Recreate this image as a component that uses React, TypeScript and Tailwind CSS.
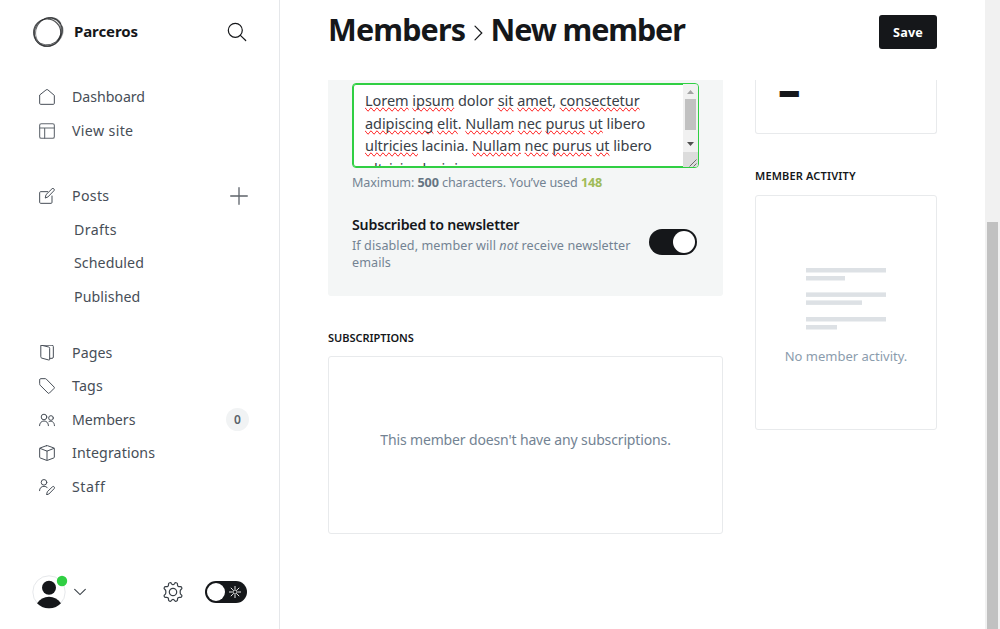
import type { ReactNode } from "react";

function Icon({ children, className = "h-4 w-4" }: { children: ReactNode; className?: string }) {
  return (
    <svg viewBox="0 0 24 24" fill="none" stroke="currentColor" strokeWidth="1.5" strokeLinecap="round" strokeLinejoin="round" className={className}>
      {children}
    </svg>
  );
}

const homeIcon = <path d="M1 9.6V21.5A1.5 1.5 0 0 0 2.5 23h19a1.5 1.5 0 0 0 1.500-1.500V9.600L13.200 1.200a1.800 1.800 0 0 0-2.400 0Z" />;
const layoutIcon = (
  <g strokeWidth="1.6" opacity="0.85">
    <rect x="1" y="1" width="22" height="22" rx="2.500" />
    <path d="M1 7.500h22M8.500 7.500V23" />
  </g>
);
const editIcon = (
  <g>
    <path d="M13 5.500H2.500A1.500 1.500 0 0 0 1 7v14.500A1.500 1.500 0 0 0 2.500 23H18a1.500 1.500 0 0 0 1.500-1.500V12" />
    <path d="M9.500 14.500l1-4.500L19.400 1.300a1.900 1.900 0 0 1 2.900 0 1.900 1.900 0 0 1 .1 2.800L13.800 13Z" />
  </g>
);
const pagesIcon = (
  <g>
    <path d="M3.500.300h16a2 2 0 0 1 2 2V18a2 2 0 0 1-2 2h-3" />
    <path d="M3.500.300 14.500 3a2 2 0 0 1 1.500 2v16.500a1 1 0 0 1-1.300 1L4.200 19.700a2 2 0 0 1-1.500-2V1Z" />
  </g>
);
const tagIcon = <path d="M1 2.500A1.500 1.500 0 0 1 2.500 1h6.800a2.500 2.500 0 0 1 1.700.700L22.600 13.500a1.500 1.500 0 0 1 0 2.100l-7 7a1.500 1.500 0 0 1-2.100 0L1.700 10.800A2.500 2.500 0 0 1 1 9.100Z" />;
const membersIcon = (
  <g>
    <circle cx="7.500" cy="7.500" r="4.200" />
    <circle cx="18" cy="9" r="3.500" />
    <path d="M.800 20.500c0-4 2.800-7 6.700-7s6.700 3 6.700 7M15 14.400c4-2 8.200.600 8.200 6.100" />
  </g>
);
const boxIcon = (
  <g>
    <path d="M11.300 1 1.800 4.400A1.300 1.300 0 0 0 1 5.600v12.600a1.300 1.300 0 0 0 .8 1.200L11.300 23a2 2 0 0 0 1.400 0l9.500-3.600a1.300 1.300 0 0 0 .8-1.200V5.600a1.300 1.300 0 0 0-.8-1.200L12.700 1a2 2 0 0 0-1.400 0Z" />
    <path d="M1.400 5 12 9.200 22.600 5M12 9.200V23" />
  </g>
);
const staffIcon = (
  <g>
    <circle cx="7.500" cy="5" r="4.200" />
    <path d="M.800 17.500c0-4 2.800-6.500 6.700-6.500 2.300 0 4 .900 5.200 2.300" />
    <path d="M11.500 23.200l.900-4L20 11.800a1.900 1.900 0 0 1 2.700 2.700l-7.500 7.600Z" />
  </g>
);

function NavRow({ icon, label, spacing, children }: { icon: ReactNode; label: string; spacing: string; children?: ReactNode }) {
  return (
    <li className="flex h-[33.5px] items-center pl-[39px] pr-[30px]">
      <Icon>{icon}</Icon>
      <span className={`ml-[17px] flex-1 whitespace-nowrap ${spacing}`}>{label}</span>
      {children}
    </li>
  );
}

function SubRow({ label, spacing }: { label: string; spacing: string }) {
  return (
    <li className="flex h-[33.5px] items-center pl-[74px]">
      <span className={`whitespace-nowrap ${spacing}`}>{label}</span>
    </li>
  );
}

function Logo() {
  return (
    <svg viewBox="0 0 32 32" className="h-8 w-8" fill="none" stroke="#26282b">
      <circle cx="15.200" cy="16.600" r="13.600" strokeWidth="1.200" opacity="0.800" />
      <ellipse cx="16.600" cy="15.600" rx="14.600" ry="13" strokeWidth="0.900" opacity="0.700" transform="rotate(-35 16 16)" />
      <ellipse cx="16.800" cy="15.400" rx="13" ry="14.700" strokeWidth="0.900" opacity="0.600" transform="rotate(25 16 16)" />
      <ellipse cx="15.800" cy="16" rx="15" ry="12.600" strokeWidth="0.900" opacity="0.550" transform="rotate(-55 16 16)" />
      <path d="M16 2.400c5-.800 10 1 12.500 5.500M29.500 10c2 5 .500 11-4 15" strokeWidth="2.400" opacity="0.400" />
    </svg>
  );
}

function Gear() {
  return (
    <svg viewBox="0 0 20 20" className="h-5 w-5" fill="none" stroke="#394047" strokeWidth="1.200" strokeLinejoin="round">
      <circle cx="10" cy="10" r="3.700" />
      <path d="M10 2.700c.900 0 1.200-.500 1.600-1.300.400-.900 1-.900 1.700-.600.900.300 1.300.700 1.200 1.500-.100.900 0 1.500.600 2s1.200.500 2.100.300c.800-.200 1.200.200 1.500.900.400.800.300 1.300-.400 1.800-.800.600-1.100 1.100-1.100 1.800v1.800c0 .700.300 1.200 1.100 1.800.700.500.800 1 .400 1.800-.300.700-.700 1.100-1.500.900-.900-.200-1.500-.200-2.100.300s-.700 1.100-.600 2c.100.800-.300 1.200-1.200 1.500-.700.300-1.300.300-1.700-.600-.400-.800-.700-1.300-1.600-1.300s-1.200.500-1.600 1.300c-.400.900-1 .900-1.700.600-.900-.300-1.300-.700-1.200-1.500.100-.900 0-1.500-.600-2s-1.200-.500-2.100-.300c-.800.200-1.200-.200-1.500-.900-.400-.800-.300-1.300.400-1.800.800-.600 1.100-1.100 1.100-1.800V9.100c0-.700-.300-1.200-1.100-1.800-.700-.500-.800-1-.400-1.800.300-.700.700-1.100 1.500-.900.900.200 1.500.200 2.100-.300s.700-1.100.600-2c-.100-.800.300-1.200 1.200-1.500.700-.300 1.300-.300 1.700.600.400.800.700 1.300 1.600 1.300Z" />
    </svg>
  );
}

function Misspelt({ children }: { children: string }) {
  return <span className="[text-decoration-line:spelling-error]">{children}</span>;
}

function NotesField() {
  return (
    <div className="flex h-[85px] w-[347px] overflow-hidden rounded-[4px] border border-[#30cf43] bg-white shadow-[inset_0_0_0_1px_#30cf43]">
      <div className="my-px h-[81px] flex-1 overflow-hidden whitespace-nowrap pl-3 pt-1 text-[14.5px] leading-[22.5px] text-[#394047]">
        <p className="tracking-[-0.045px]">
          <Misspelt>Lorem</Misspelt> <Misspelt>ipsum</Misspelt> dolor <Misspelt>sit</Misspelt> <Misspelt>amet</Misspelt>, <Misspelt>consectetur</Misspelt>
        </p>
        <p className="tracking-[-0.06px]">
          <Misspelt>adipiscing</Misspelt> <Misspelt>elit</Misspelt>. <Misspelt>Nullam</Misspelt> <Misspelt>nec</Misspelt> <Misspelt>purus</Misspelt> <Misspelt>ut</Misspelt> libero
        </p>
        <p className="tracking-[-0.065px]">
          <Misspelt>ultricies</Misspelt> lacinia. <Misspelt>Nullam</Misspelt> <Misspelt>nec</Misspelt> <Misspelt>purus</Misspelt> <Misspelt>ut</Misspelt> libero
        </p>
        <p className="tracking-[0.03px]">ultricies lacinia.</p>
      </div>
      <div className="flex w-[15px] flex-col items-center bg-[#f1f1f1]">
        <svg viewBox="0 0 15 15" className="h-[15px] w-[15px] shrink-0">
          <path d="M4 10 7.500 6 11 10Z" fill="#a3a3a3" />
        </svg>
        <div className="h-[31px] w-[11px] shrink-0 bg-[#c1c1c1]" />
        <div className="flex-1" />
        <svg viewBox="0 0 15 15" className="h-[15px] w-[15px] shrink-0">
          <path d="M4 5 7.500 9 11 5Z" fill="#505050" />
        </svg>
        <svg viewBox="0 0 15 15" className="h-[15px] w-[15px] shrink-0 bg-[#dcdcdc]">
          <path d="M6.500 14.500 13.500 7.500M10.500 14.500 13.500 11.500" stroke="#6b6b6b" fill="none" />
        </svg>
      </div>
    </div>
  );
}

function ActivityLines() {
  return (
    <svg viewBox="0 0 80 62" className="h-[62px] w-20" fill="#dde1e5">
      <rect y="0" width="80" height="4.500" />
      <rect y="8" width="39" height="4.500" />
      <rect y="24.400" width="80" height="4.500" />
      <rect y="32.400" width="56" height="4.500" />
      <rect y="49" width="80" height="4.500" />
      <rect y="57" width="31" height="4.500" />
    </svg>
  );
}

export default function App() {
  return (
    <div className="flex h-[629px] w-[1000px] overflow-hidden bg-white font-['Noto_Sans',sans-serif] text-[#15171a]">
      <aside className="flex w-[280px] shrink-0 flex-col border-r border-[#e5e7ea]">
        <div className="flex h-16 items-center pl-8 pr-8">
          <Logo />
          <span className="mb-0.5 ml-2.5 flex-1 text-[15px] font-bold tracking-[-0.09px]">Parceros</span>
          <svg viewBox="0 0 20 20" className="h-5 w-5" fill="none" stroke="#15171a" strokeWidth="1.200" strokeLinecap="round">
            <circle cx="8.300" cy="8.300" r="7" />
            <path d="M13.400 13.400 18.700 18.500" />
          </svg>
        </div>

        <nav className="flex flex-1 flex-col pt-[16.5px] text-[14.2px] leading-5 text-[#474e57]">
          <ul>
            <NavRow icon={homeIcon} label="Dashboard" spacing="tracking-[-0.05px]" />
            <NavRow icon={layoutIcon} label="View site" spacing="tracking-[0.35px]" />
          </ul>
          <ul className="mt-8">
            <NavRow icon={editIcon} label="Posts" spacing="tracking-[0.32px]">
              <svg viewBox="0 0 18 18" className="mr-px h-[18px] w-[18px]" stroke="#5d636a" strokeWidth="1.300" strokeLinecap="round">
                <path d="M9 .700v16.600M.700 9h16.600" />
              </svg>
            </NavRow>
            <SubRow label="Drafts" spacing="tracking-[0.38px]" />
            <SubRow label="Scheduled" spacing="tracking-[0.08px]" />
            <SubRow label="Published" spacing="tracking-[0.08px]" />
          </ul>
          <ul className="mt-[22.5px]">
            <NavRow icon={pagesIcon} label="Pages" spacing="tracking-[0.05px]" />
            <NavRow icon={tagIcon} label="Tags" spacing="tracking-[0.19px]" />
            <NavRow icon={membersIcon} label="Members" spacing="tracking-[0px]">
              <span className="flex h-[23px] w-[23px] items-center justify-center rounded-full bg-[#f1f3f4] text-[12px] font-semibold text-[#5b636b]">0</span>
            </NavRow>
            <NavRow icon={boxIcon} label="Integrations" spacing="tracking-[0.1px]" />
            <NavRow icon={staffIcon} label="Staff" spacing="tracking-[0.57px]" />
          </ul>
        </nav>

        <div className="flex h-[74px] items-center pl-8 pr-8">
          <svg viewBox="0 0 36 36" className="h-9 w-9">
            <circle cx="17" cy="18" r="16.200" fill="#fff" stroke="#e6e8eb" />
            <circle cx="17" cy="13.700" r="7" fill="#15171a" />
            <path d="M5 29.200C8 25 12 22.800 17 22.800s9 2.200 12 6.400C26 32.300 22 34.200 17 34.200S8 32.300 5 29.200Z" fill="#15171a" />
            <circle cx="30" cy="7" r="5.200" fill="#30cf43" />
          </svg>
          <svg viewBox="0 0 12 8" className="ml-1.5 h-2 w-3" fill="none" stroke="#394047" strokeWidth="1.100" strokeLinecap="round">
            <path d="M.700 1.400 6 6.600 11.300 1.400" />
          </svg>
          <div className="flex-1" />
          <Gear />
          <div className="ml-[22px] flex h-[22px] w-[42px] items-center rounded-full bg-[#15171a] pl-0.5">
            <div className="h-[18px] w-[18px] rounded-full bg-white" />
            <svg viewBox="0 0 12 12" className="ml-1 h-3 w-3" fill="none" stroke="#fff" strokeWidth="0.900">
              <circle cx="6" cy="6" r="2.100" />
              <path d="M6 0v3M6 9v3M0 6h3M9 6h3M1.800 1.800l2.100 2.100M8.100 8.100l2.100 2.100M10.200 1.800 8.100 3.900M3.900 8.100l-2.100 2.100" />
            </svg>
          </div>
        </div>
      </aside>

      <main className="flex flex-1 flex-col pl-12 pr-12">
        <header className="flex h-20 shrink-0 items-start">
          <h1 className="flex flex-1 whitespace-nowrap pt-[7px] text-[30.5px] font-bold leading-[44px]">
            <span className="w-[137.5px] tracking-[-0.85px]">Members</span>
            <svg viewBox="0 0 9 16" className="ml-2 mr-[9px] mt-[18px] h-4 w-[9px]" fill="none" stroke="#15171a" strokeWidth="1.200" strokeLinecap="round">
              <path d="M1 1.200 7.800 8 1 14.800" />
            </svg>
            <span className="-ml-px tracking-[-1.1px]">New member</span>
          </h1>
          <button className="mt-[15px] h-[34px] w-[58px] rounded-[3px] bg-[#15171a] pt-0.5 text-[12.6px] font-bold tracking-[0.2px] text-white">Save</button>
        </header>

        <div className="flex flex-1 items-start gap-8">
          <div className="w-[395px]">
            <section className="h-[216px] rounded-b-[3px] bg-[#f4f6f6] px-6 pt-[3px]">
              <NotesField />
              <p className="mt-1.5 whitespace-nowrap text-[12.6px] leading-[18px] tracking-[-0.1px] text-[#738393]">
                Maximum: <b className="text-[#657482]">500</b> characters. You’ve used <b className="text-[#9fbb58]">148</b>
              </p>
              <div className="mt-[23px] flex">
                <div className="w-[297px] whitespace-nowrap">
                  <h4 className="text-[14.2px] font-semibold leading-5 tracking-[-0.2px]">Subscribed to newsletter</h4>
                  <p className="mt-[2px] text-[12.6px] leading-[17px] tracking-[0.08px] text-[#738393]">
                    If disabled, member will <i>not</i> receive newsletter
                    <br />
                    emails
                  </p>
                </div>
                <div className="mt-3.5 flex h-[26px] w-12 items-center justify-end rounded-full bg-[#15171a] pr-[2px]">
                  <div className="h-[22px] w-[22px] rounded-full bg-white" />
                </div>
              </div>
            </section>
            <h5 className="mt-[34px] text-[11px] font-semibold leading-4 tracking-[-0.04px]">SUBSCRIPTIONS</h5>
            <section className="mt-[10px] flex h-[178px] items-center justify-center rounded-[3px] border border-[#e8eaec] pb-3 text-[14px] tracking-[-0.14px] text-[#738393]">
              This member doesn't have any subscriptions.
            </section>
          </div>

          <div className="w-[182px]">
            <section className="flex h-[54px] rounded-b-[3px] border border-t-0 border-[#e8eaec] pl-[22px]">
              <p className="-mt-[11px] text-[45px] font-black leading-10">–</p>
            </section>
            <h5 className="mt-[34px] text-[11px] font-semibold leading-4 tracking-[0.16px]">MEMBER ACTIVITY</h5>
            <section className="mt-[11px] flex h-[235px] flex-col items-center rounded-[3px] border border-[#e8eaec] pt-[72px]">
              <ActivityLines />
              <p className="mt-4 whitespace-nowrap text-[13px] leading-5 text-[#8b9cad]">No member activity.</p>
            </section>
          </div>
        </div>
      </main>

      <div className="flex w-[15px] shrink-0 flex-col items-center bg-[#f1f1f1] pt-[222px]">
        <div className="w-[11px] flex-1 bg-[#c1c1c1]" />
      </div>
    </div>
  );
}
